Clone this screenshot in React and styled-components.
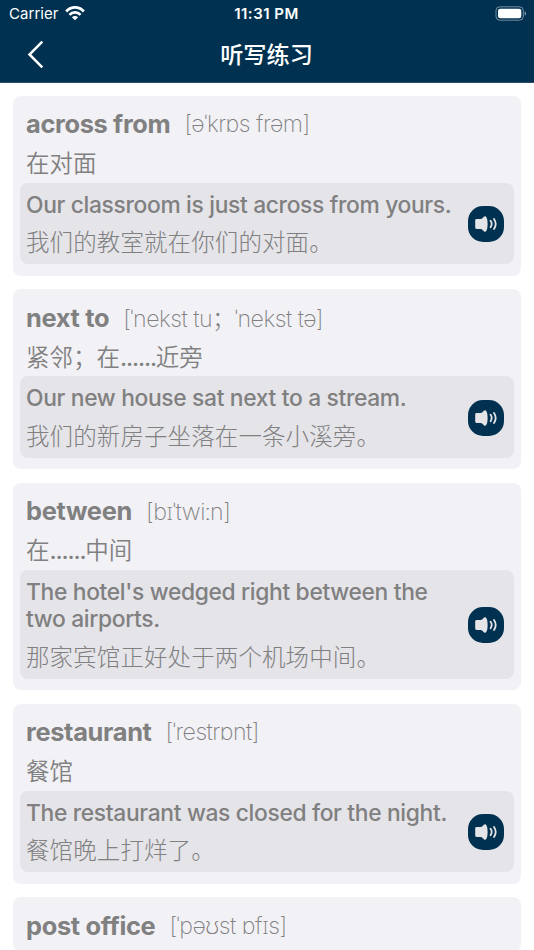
import React from 'react';
import styled, { createGlobalStyle } from 'styled-components';

const GlobalStyle = createGlobalStyle`
  html, body {
    margin: 0;
    padding: 0;
    background: #fff;
  }
  body {
    height: 950px;
    overflow: hidden;
    font-family: Inter, "Noto Sans CJK SC", sans-serif;
  }
`;

const Screen = styled.div`
  width: 534px;
  height: 950px;
  overflow: hidden;
`;

const Header = styled.header`
  height: 83px;
  box-sizing: border-box;
  background: #013150;
  border-bottom: 1px solid #29506b;
  color: #fff;
`;

const StatusBar = styled.div`
  display: grid;
  grid-template-columns: 1fr auto 1fr;
  align-items: center;
  height: 27px;
  padding: 0 7px 0 9px;
  font-size: 15px;
`;

const Carrier = styled.div`
  display: flex;
  align-items: center;
  gap: 6px;
  letter-spacing: 0.05px;
`;

const Clock = styled.div`
  margin-right: 3px;
  font-weight: 600;
  font-size: 15px;
  letter-spacing: 0.5px;
`;

const Battery = styled.svg`
  justify-self: end;
`;

const NavBar = styled.div`
  display: grid;
  grid-template-columns: 1fr auto 1fr;
  align-items: center;
  height: 55px;
  padding: 0 28px 0 27px;
`;

const BackButton = styled.button`
  display: flex;
  width: 17px;
  height: 29px;
  padding: 0;
  border: 0;
  background: none;
  color: #fff;
`;

const NavTitle = styled.h1`
  margin: 0;
  font-size: 23.2px;
  font-weight: 500;
  line-height: 30px;
`;

const List = styled.main`
  display: flex;
  flex-direction: column;
  gap: 13.5px;
  padding: 13px;
`;

const Card = styled.article`
  padding: 12.4px 7px 11.5px;
  border-radius: 8px;
  background: #f2f1f6;
  color: #808080;
`;

const WordRow = styled.div`
  display: flex;
  align-items: center;
  height: 31px;
  padding-left: 6px;
  white-space: nowrap;
`;

const Word = styled.h2`
  margin: 0 14px 0 0;
  font-size: 25.4px;
  font-weight: 700;
  letter-spacing: -0.33px;
`;

const Phonetic = styled.span`
  font-family: Inter, "Open Sans", "Noto Sans", "Noto Sans CJK SC", sans-serif;
  font-size: 23.2px;
  font-weight: 200;
  letter-spacing: -0.5px;
`;

const Meaning = styled.p`
  height: 28px;
  margin: 10.8px 0 4.8px 6px;
  font-size: 23.5px;
  font-weight: 350;
  line-height: 28px;
`;

const Dots = styled.span`
  font-weight: 500;
  letter-spacing: -1.15px;
`;

const Example = styled.div`
  display: flex;
  align-items: center;
  justify-content: space-between;
  padding: 8px 10px 7px 6px;
  border-radius: 8px;
  background: #e5e4e9;
`;

const English = styled.p`
  margin: 0 0 11px;
  font-size: 22.8px;
  font-weight: 500;
  line-height: 27.5px;
  letter-spacing: -0.33px;
  white-space: pre-line;
`;

const Chinese = styled.p`
  height: 28px;
  margin: 0;
  font-size: 23.5px;
  font-weight: 300;
  line-height: 28px;
  letter-spacing: 0.1px;
`;

const PlayButton = styled.button`
  display: flex;
  flex: none;
  align-items: center;
  justify-content: center;
  width: 36px;
  height: 36px;
  padding: 0;
  border: 0;
  border-radius: 15px;
  background: #013150;
  color: #e5e4e9;
`;

const entries = [
  {
    word: 'across from',
    phonetic: '[əˈkrɒs frəm]',
    meaning: '在对面',
    english: 'Our classroom is just across from yours.',
    chinese: '我们的教室就在你们的对面。',
  },
  {
    word: 'next to',
    phonetic: '[ˈnekst tu；ˈnekst tə]',
    meaning: '紧邻；在......近旁',
    english: 'Our new house sat next to a stream.',
    chinese: '我们的新房子坐落在一条小溪旁。',
  },
  {
    word: 'between',
    phonetic: '[bɪˈtwiːn]',
    meaning: '在......中间',
    english: "The hotel's wedged right between the\ntwo airports.",
    chinese: '那家宾馆正好处于两个机场中间。',
  },
  {
    word: 'restaurant',
    phonetic: '[ˈrestrɒnt]',
    meaning: '餐馆',
    english: 'The restaurant was closed for the night.',
    chinese: '餐馆晚上打烊了。',
  },
  {
    word: 'post office',
    phonetic: '[ˈpəʊst ɒfɪs]',
  },
];

function WifiIcon() {
  return (
    <svg width="20" height="15" viewBox="0 0 20 15" fill="none" stroke="#fff" strokeWidth="2.7">
      <path d="M1.2 5.5C6-.1 14-.1 18.8 5.5" />
      <path d="M4.5 8.8C7.4 5.5 12.6 5.5 15.5 8.8" />
      <path d="M10 14.3 6.9 11.2C8.5 9.6 11.5 9.6 13.1 11.2Z" fill="#fff" stroke="none" />
    </svg>
  );
}

function BatteryIcon() {
  return (
    <Battery width="32" height="15" viewBox="0 0 32 15">
      <rect x="1" y="0.8" width="27.3" height="13.4" rx="3.8" fill="none" stroke="#fff" strokeOpacity=".45" />
      <rect x="3" y="2.7" width="23.3" height="9.6" rx="2.2" fill="#fff" />
      <path d="M29.7 5.3c2 .8 2 3.6 0 4.4z" fill="#fff" fillOpacity=".5" />
    </Battery>
  );
}

function SpeakerIcon() {
  return (
    <svg width="22" height="16" viewBox="0 0 22 16" fill="currentColor">
      <path d="M1.6 3H5.6Q6.6 3 7.4 2.2L8.8.8C10.4-.7 12.6.6 12.6 8S10.4 16.7 8.8 15.2L7.4 13.8Q6.6 13 5.6 13H1.6Q.2 13 .2 11.6V4.4Q.2 3 1.6 3Z" />
      <path d="M15.6 4.8Q17.8 8 15.6 11.2M19 3Q22.4 8 19 13" fill="none" stroke="currentColor" strokeWidth="1.8" strokeLinecap="round" />
    </svg>
  );
}

function WordCard({ entry }) {
  return (
    <Card>
      <WordRow>
        <Word>{entry.word}</Word>
        <Phonetic>{entry.phonetic}</Phonetic>
      </WordRow>
      {entry.meaning && (
        <Meaning>
          {entry.meaning.split(/(\.+)/).map((part, i) => (
            part.startsWith('.') ? <Dots key={i}>{part}</Dots> : part
          ))}
        </Meaning>
      )}
      {entry.english && (
        <Example>
          <div>
            <English>{entry.english}</English>
            <Chinese>{entry.chinese}</Chinese>
          </div>
          <PlayButton aria-label="播放">
            <SpeakerIcon />
          </PlayButton>
        </Example>
      )}
    </Card>
  );
}

function App() {
  return (
    <Screen>
      <GlobalStyle />
      <Header>
        <StatusBar>
          <Carrier>
            Carrier
            <WifiIcon />
          </Carrier>
          <Clock>11:31 PM</Clock>
          <BatteryIcon />
        </StatusBar>
        <NavBar>
          <BackButton aria-label="返回">
            <svg width="17" height="29" viewBox="0 0 17 29" fill="none" stroke="currentColor" strokeWidth="2.5">
              <path d="M15.3 1.7 2.5 14.5 15.3 27.3" />
            </svg>
          </BackButton>
          <NavTitle>听写练习</NavTitle>
        </NavBar>
      </Header>
      <List>
        {entries.map((entry) => (
          <WordCard key={entry.word} entry={entry} />
        ))}
      </List>
    </Screen>
  );
}

export default App;
